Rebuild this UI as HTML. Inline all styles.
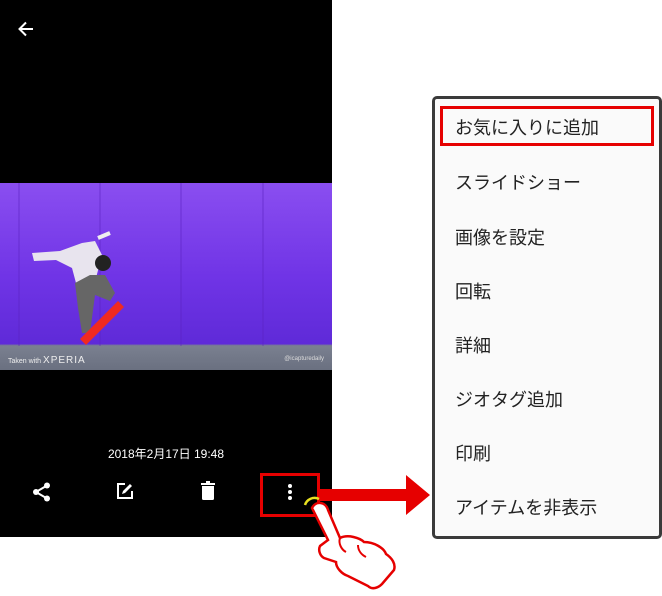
<!DOCTYPE html>
<html><head><meta charset="utf-8"><style>
body{margin:0;width:662px;height:596px;background:#fff;position:relative;overflow:hidden;font-family:"Liberation Sans","Noto Sans CJK JP",sans-serif}
.panel{position:absolute;left:0;top:0;width:332px;height:537px;background:#000}
.photo{position:absolute;left:0;top:183px;width:332px;height:187px;background:linear-gradient(180deg,#8a4ef0 0%,#7034e6 50%,#5f2ad8 86%,#7a8090 87%,#6a7080 100%)}
.date{position:absolute;left:0;width:332px;top:445px;text-align:center;color:#fff;font-size:12px}
.menu{position:absolute;left:432px;top:96px;width:224px;height:437px;border:3px solid #3a3a3a;border-radius:5px;background:#fafafa}
.item{position:absolute;left:20px;font-size:18px;color:#222;line-height:24px}
.sel{position:absolute;left:5px;top:7px;width:208px;height:34px;border:3px solid #e60000}
</style></head><body>
<div class="panel">
<svg style="position:absolute;left:17px;top:20px" width="18" height="18" viewBox="0 0 18 18"><path d="M16 9H3M9 2.5L2.5 9 9 15.5" stroke="#fff" stroke-width="2" fill="none"/></svg>
<div class="photo">
<svg style="position:absolute;left:0;top:0" width="332" height="187" viewBox="0 0 332 187">
<path d="M19 0V163M100 0V163M181 0V163M263 0V163" stroke="#5a22c0" stroke-width="1" opacity=".6"/>
<path d="M32 70L60 68 82 60 95 58 102 72 96 95 88 100 76 100 72 85 56 77 34 78Z" fill="#e8e4ee"/>
<path d="M75 100L90 92 105 92 115 110 110 118 95 112 90 150 82 150 78 125Z" fill="#666"/>
<circle cx="103" cy="80" r="8" fill="#222"/>
<path d="M118 118l6 6-38 38-6-6z" fill="#f02a20"/>
<path d="M98 55l12-5" stroke="#eee" stroke-width="4"/>
</svg>
<div style="position:absolute;left:8px;top:172px;color:#eee;font-size:7px">Taken with <span style="font-size:10px;letter-spacing:1px">XPERIA</span></div>
<div style="position:absolute;right:8px;top:173px;color:#ddd;font-size:6px">@icapturedaily</div>
</div>
<div class="date">2018年2月17日 19:48</div>
<svg style="position:absolute;left:32px;top:482px" width="20" height="20" viewBox="0 0 20 20"><circle cx="15" cy="3.5" r="3" fill="#fff"/><circle cx="4" cy="10" r="3" fill="#fff"/><circle cx="15" cy="16.5" r="3" fill="#fff"/><path d="M15 3.5L4 10 15 16.5" stroke="#fff" stroke-width="2" fill="none"/></svg>
<svg style="position:absolute;left:116px;top:482px" width="18" height="18" viewBox="0 0 18 18"><path d="M9 2H2v14h14V9" stroke="#fff" stroke-width="2" fill="none"/><path d="M6 12l1-3 7-7 2 2-7 7z" fill="#fff"/></svg>
<svg style="position:absolute;left:200px;top:481px" width="16" height="19" viewBox="0 0 16 19"><rect x="1" y="2" width="14" height="2" fill="#fff"/><rect x="6" y="0" width="4" height="2" fill="#fff"/><path d="M2 5h12v12.5a1.5 1.5 0 0 1-1.5 1.5h-9A1.5 1.5 0 0 1 2 17.5z" fill="#fff"/></svg>
<div style="position:absolute;left:260px;top:473px;width:54px;height:38px;border:3px solid #e60000;box-sizing:content-box"></div>
<svg style="position:absolute;left:287px;top:483px" width="6" height="18" viewBox="0 0 6 18"><circle cx="3" cy="3" r="2" fill="#fff"/><circle cx="3" cy="9" r="2" fill="#fff"/><circle cx="3" cy="15" r="2" fill="#fff"/></svg>
</div>
<svg style="position:absolute;left:0;top:0" width="662" height="596" viewBox="0 0 662 596">
<path d="M318 489H406V475L430 495 406 515V501H318Z" fill="#e60000"/>
<path d="M305 505a10 10 0 0 1 14 -6" stroke="#e8e020" stroke-width="2.5" fill="none"/>
<path d="M312 508c4-8 14-6 16 2l12 28c8-4 20 0 24 4 10 0 20 6 22 12 6 4 10 10 8 16l-12 14c-4 4-10 6-14 2l-20-10c-6-2-12-8-12-14l-12-4c-4-2-6-8-4-12l8-6z" fill="#fff" stroke="#e60000" stroke-width="2.5"/>
<path d="M340 538c-2 6 2 12 6 14M358 545c0 6 4 10 8 12" stroke="#e60000" stroke-width="2" fill="none"/>
</svg>
<div class="menu">
<div class="sel"></div>
<div class="item" style="top:17px">お気に入りに追加</div>
<div class="item" style="top:72px">スライドショー</div>
<div class="item" style="top:127px">画像を設定</div>
<div class="item" style="top:181px">回転</div>
<div class="item" style="top:235px">詳細</div>
<div class="item" style="top:289px">ジオタグ追加</div>
<div class="item" style="top:343px">印刷</div>
<div class="item" style="top:397px">アイテムを非表示</div>
</div>
</body></html>
